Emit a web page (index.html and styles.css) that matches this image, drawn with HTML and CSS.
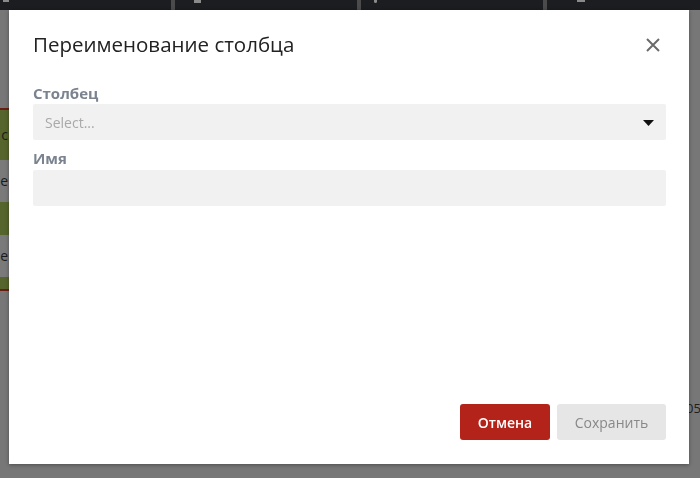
FILE: index.html
```html
<!DOCTYPE html>
<html lang="ru">
<head>
<meta charset="utf-8">
<title>Переименование столбца</title>
<link rel="stylesheet" href="styles.css">
</head>
<body>
<div class="app">
  <div class="toolbar">
    <div class="tool tool-a"><span class="peek peek-arrow"></span></div>
    <div class="tool tool-b"><span class="peek peek-bars"></span></div>
    <div class="tool tool-c"><span class="peek peek-dot"></span></div>
    <div class="tool tool-d"><span class="peek peek-ret"></span></div>
  </div>
  <div class="workspace">
    <div class="grid-left">
      <div class="row row-green row-top">с</div>
      <div class="row row-gray">е</div>
      <div class="row row-green row-mid"></div>
      <div class="row row-gray">е</div>
      <div class="row row-green row-end"></div>
    </div>
    <div class="grid-spacer"></div>
    <div class="grid-right">05</div>
  </div>
</div>

<div class="modal" role="dialog" aria-labelledby="modal-title">
  <div class="modal-header">
    <h2 class="modal-title" id="modal-title">Переименование столбца</h2>
    <button class="modal-close" type="button" aria-label="Закрыть">
      <svg width="14" height="14" viewBox="0 0 14 14"><path d="M1 1 L13 13 M13 1 L1 13" stroke="#6b6b6b" stroke-width="2" fill="none"/></svg>
    </button>
  </div>
  <div class="modal-body">
    <label class="field-label">Столбец</label>
    <div class="field field-select">
      <span class="placeholder">Select...</span>
      <svg class="caret" width="11" height="6" viewBox="0 0 11 6"><path d="M0 0 H11 L5.5 6 Z" fill="#111"/></svg>
    </div>
    <label class="field-label">Имя</label>
    <div class="field field-input"></div>
  </div>
  <div class="modal-footer">
    <button class="btn btn-cancel" type="button">Отмена</button>
    <button class="btn btn-save" type="button">Сохранить</button>
  </div>
</div>
</body>
</html>
```

FILE: styles.css
```css
html, body {
  margin: 0;
  padding: 0;
  width: 700px;
  height: 478px;
  overflow: hidden;
  background: #777777;
  font-family: "Open Sans", "Noto Sans", sans-serif;
}

.app {
  display: flex;
  flex-direction: column;
  height: 478px;
}

.toolbar {
  display: flex;
  height: 10px;
  background: #4b4b4b;
  gap: 4px;
}

.tool {
  background: #1c1d20;
  position: relative;
  overflow: hidden;
}
.tool-a { width: 171px; }
.tool-b { width: 182px; }
.tool-c { width: 182px; }
.tool-d { flex: 1; }

.peek {
  position: absolute;
  top: 0;
  height: 2px;
  background: #8a8a8a;
}
.peek-arrow { left: 3px; width: 6px; }
.peek-bars { left: 19px; width: 7px; height: 3px; }
.peek-dot { left: 13px; width: 3px; height: 3px; border-radius: 0 0 2px 2px; }
.peek-ret { left: 30px; width: 8px; }

.workspace {
  flex: 1;
  display: flex;
  background: #777777;
}

.grid-left {
  width: 9px;
  padding-top: 98px;
  overflow: hidden;
}

.row {
  font-size: 14px;
  line-height: 16px;
  color: #1b1b1b;
  display: flex;
  align-items: center;
  justify-content: flex-end;
  padding-right: 1px;
}

.row-green { background: #56652c; }
.row-gray { background: #7a7a7a; height: 42px; }
.row-top { border-top: 2px solid #6a1c14; height: 50px; }
.row-mid { height: 33px; }
.row-end { height: 12px; border-bottom: 2px solid #6a1c14; }

.grid-spacer { flex: 1; }

.grid-right {
  width: 14px;
  padding-top: 389px;
  font-size: 13px;
  line-height: 18px;
  color: #1e1e1e;
  white-space: nowrap;
}

.modal {
  position: fixed;
  left: 9px;
  top: 10px;
  width: 680px;
  height: 454px;
  box-sizing: border-box;
  padding: 21px 23px 24px 24px;
  background: #ffffff;
  display: flex;
  flex-direction: column;
  box-shadow: 0 1px 4px rgba(0, 0, 0, 0.35);
}

.modal-header {
  display: flex;
  align-items: center;
  justify-content: space-between;
  height: 27px;
}

.modal-title {
  margin: 0;
  font-size: 20.5px;
  line-height: 27px;
  font-weight: 400;
  color: #222222;
}

.modal-close {
  border: 0;
  padding: 0;
  margin: 1px 6px 0 0;
  background: transparent;
  width: 14px;
  height: 14px;
  display: flex;
  cursor: pointer;
}

.modal-body {
  margin-top: 25px;
  display: flex;
  flex-direction: column;
}

.field-label {
  display: block;
  font-size: 15px;
  line-height: 20px;
  font-weight: 700;
  color: #7a838e;
  margin-bottom: 1px;
}

.field {
  height: 36px;
  background: #f1f1f1;
  border-radius: 2px;
  margin-bottom: 8px;
  box-sizing: border-box;
}

.field-select {
  display: flex;
  align-items: center;
  justify-content: space-between;
  padding: 0 12px;
}

.field-input { margin-top: 1px; }

.placeholder {
  font-size: 14px;
  color: #a9a9a9;
}

.caret { margin-top: 1px; }

.modal-footer {
  margin-top: auto;
  display: flex;
  justify-content: flex-end;
  gap: 7px;
}

.btn {
  height: 36px;
  border: 0;
  border-radius: 3px;
  font-family: "Open Sans", "Noto Sans", sans-serif;
  font-size: 14px;
  padding: 0;
  cursor: pointer;
}

.btn-cancel {
  width: 90px;
  background: #b3231a;
  color: #ffffff;
  font-weight: 600;
}

.btn-save {
  width: 109px;
  background: #e6e6e6;
  color: #888888;
  font-weight: 400;
}
```
